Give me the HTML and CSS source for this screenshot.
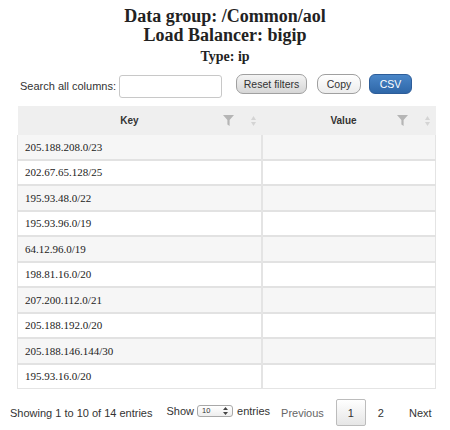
FILE: index.html
```html
<!DOCTYPE html>
<html>
<head>
<meta charset="utf-8">
<link rel="stylesheet" href="styles.css">
</head>
<body>
<div class="page">
  <h1 class="title">Data group: /Common/aol<br>Load Balancer: bigip</h1>
  <h2 class="subtitle">Type: ip</h2>
  <div class="toolbar">
    <label class="search">Search all columns: <span class="input"></span></label>
    <span class="btn btn-reset">Reset filters</span>
    <span class="btn btn-copy">Copy</span>
    <span class="btn btn-csv">CSV</span>
  </div>
  <table class="grid">
    <thead>
      <tr>
        <th><span class="hlabel">Key</span>
          <svg class="filter" width="11" height="11" viewBox="0 0 11 11"><path d="M0 0H11L6.6 5V11L4.4 9.5V5Z" fill="#b5b5b5"/></svg>
          <svg class="sort" width="5" height="10" viewBox="0 0 5 10"><path d="M2.5 0L5 4H0Z M2.5 10L5 6H0Z" fill="#d4d4d4"/></svg>
        </th>
        <th><span class="hlabel">Value</span>
          <svg class="filter" width="11" height="11" viewBox="0 0 11 11"><path d="M0 0H11L6.6 5V11L4.4 9.5V5Z" fill="#b5b5b5"/></svg>
          <svg class="sort" width="5" height="10" viewBox="0 0 5 10"><path d="M2.5 0L5 4H0Z M2.5 10L5 6H0Z" fill="#d4d4d4"/></svg>
        </th>
      </tr>
    </thead>
    <tbody>
      <tr><td>205.188.208.0/23</td><td></td></tr>
      <tr><td>202.67.65.128/25</td><td></td></tr>
      <tr><td>195.93.48.0/22</td><td></td></tr>
      <tr><td>195.93.96.0/19</td><td></td></tr>
      <tr><td>64.12.96.0/19</td><td></td></tr>
      <tr><td>198.81.16.0/20</td><td></td></tr>
      <tr><td>207.200.112.0/21</td><td></td></tr>
      <tr><td>205.188.192.0/20</td><td></td></tr>
      <tr><td>205.188.146.144/30</td><td></td></tr>
      <tr><td>195.93.16.0/20</td><td></td></tr>
    </tbody>
  </table>
  <div class="footer">
    <span class="info">Showing 1 to 10 of 14 entries</span>
    <span class="length">Show <span class="select">10<svg width="5" height="8" viewBox="0 0 5 8"><path d="M2.5 0L5 3H0Z M2.5 8L5 5H0Z" fill="#444"/></svg></span> entries</span>
    <span class="pager">
      <span class="pg pg-prev">Previous</span>
      <span class="pg pg-current">1</span>
      <span class="pg pg-two">2</span>
      <span class="pg pg-next">Next</span>
    </span>
  </div>
</div>
</body>
</html>
```
FILE: styles.css
```css
html, body {
  margin: 0;
  padding: 0;
  background: #fff;
}
.page {
  width: 450px;
  padding-top: 7px;
  font-family: "Liberation Sans", Arial, sans-serif;
  color: #222;
}
.title {
  margin: 0;
  text-align: center;
  font-family: "Liberation Serif", "Times New Roman", serif;
  font-weight: bold;
  font-size: 18px;
  line-height: 19px;
  color: #222;
}
.subtitle {
  margin: 4px 0 0 0;
  text-align: center;
  font-family: "Liberation Serif", "Times New Roman", serif;
  font-weight: bold;
  font-size: 14px;
  line-height: 16px;
  color: #222;
}
.toolbar {
  display: flex;
  align-items: center;
  margin-top: 7px;
  padding-left: 20px;
  height: 24px;
}
.search {
  display: flex;
  align-items: center;
  font-size: 11px;
  color: #333;
  margin-top: 4px;
  white-space: nowrap;
}
.input {
  display: inline-block;
  width: 101px;
  height: 21px;
  margin-left: 3px;
  border: 1px solid #c8c8c8;
  border-radius: 3px;
  background: #fff;
}
.btn {
  display: inline-flex;
  align-items: center;
  justify-content: center;
  height: 18px;
  font-size: 10.5px;
  border-radius: 7px;
  box-sizing: content-box;
  white-space: nowrap;
}
.btn-reset {
  margin-left: 14px;
  width: 69px;
  border: 1px solid #a0a0a0;
  background: linear-gradient(#f4f4f4, #d6d6d6);
  color: #333;
}
.btn-copy {
  margin-left: 10px;
  width: 42px;
  border: 1px solid #a0a0a0;
  background: linear-gradient(#ffffff, #ececec);
  color: #333;
  border-radius: 8px;
}
.btn-csv {
  margin-left: 8px;
  width: 41px;
  border: 1px solid #2d5d99;
  background: linear-gradient(#4a86c8, #2f67a8);
  color: #fff;
  border-radius: 6px;
}
.grid {
  margin: 10px 0 0 17px;
  width: 419px;
  border-collapse: collapse;
  table-layout: fixed;
}
.grid th {
  position: relative;
  height: 29px;
  padding: 0;
  background: #efefef;
  font-size: 10px;
  font-weight: bold;
  color: #333;
  text-align: center;
  border: none;
}
.grid th:first-child {
  width: 244px;
}
.hlabel {
  display: inline-block;
  padding-right: 10px;
}
.grid th:first-child .hlabel {
  padding-right: 20px;
}
.filter {
  position: absolute;
  top: 9px;
  right: 28px;
}
.sort {
  position: absolute;
  top: 10px;
  right: 6px;
}
.grid td {
  height: 23.5px;
  padding: 0 0 0 7px;
  font-family: "Liberation Serif", "Times New Roman", serif;
  font-size: 11px;
  color: #222;
  border-top: 2px solid #e2e2e2;
  border-left: 1px solid #e4e4e4;
  border-right: 1px solid #e4e4e4;
}
.grid tbody tr:first-child td {
  border-top: none;
}
.grid tbody tr:last-child td {
  border-bottom: 1px solid #e4e4e4;
}
.grid tbody tr:nth-child(odd) td {
  background: #f6f6f6;
}
.grid tbody tr:nth-child(even) td {
  background: #fff;
}
.grid td + td {
  border-left: 2px solid #e4e4e4;
}
.footer {
  display: flex;
  align-items: center;
  margin-top: 8px;
  padding-left: 10px;
  font-size: 11px;
  color: #333;
  white-space: nowrap;
}
.info {
  margin-right: 14px;
  margin-top: 2px;
}
.length {
  display: flex;
  align-items: center;
  margin-top: -2px;
}
.select {
  display: inline-flex;
  align-items: center;
  justify-content: space-between;
  width: 26px;
  height: 10px;
  margin: 0 4px 0 3px;
  padding: 0 4px;
  border: 1px solid #a8a8a8;
  border-radius: 3px;
  font-size: 7.5px;
  background: linear-gradient(#fff, #eee);
}
.pager {
  display: flex;
  align-items: center;
  margin-left: 11px;
  margin-top: 2px;
}
.pg {
  display: inline-flex;
  align-items: center;
  justify-content: center;
  height: 25px;
  color: #333;
}
.pg-prev {
  color: #666;
  margin-right: 12px;
}
.pg-current {
  width: 28px;
  border: 1px solid #bcbcbc;
  border-radius: 2px;
  background: linear-gradient(#ffffff, #e6e6e6);
}
.pg-two {
  margin-left: 12px;
}
.pg-next {
  margin-left: 25px;
}
```
